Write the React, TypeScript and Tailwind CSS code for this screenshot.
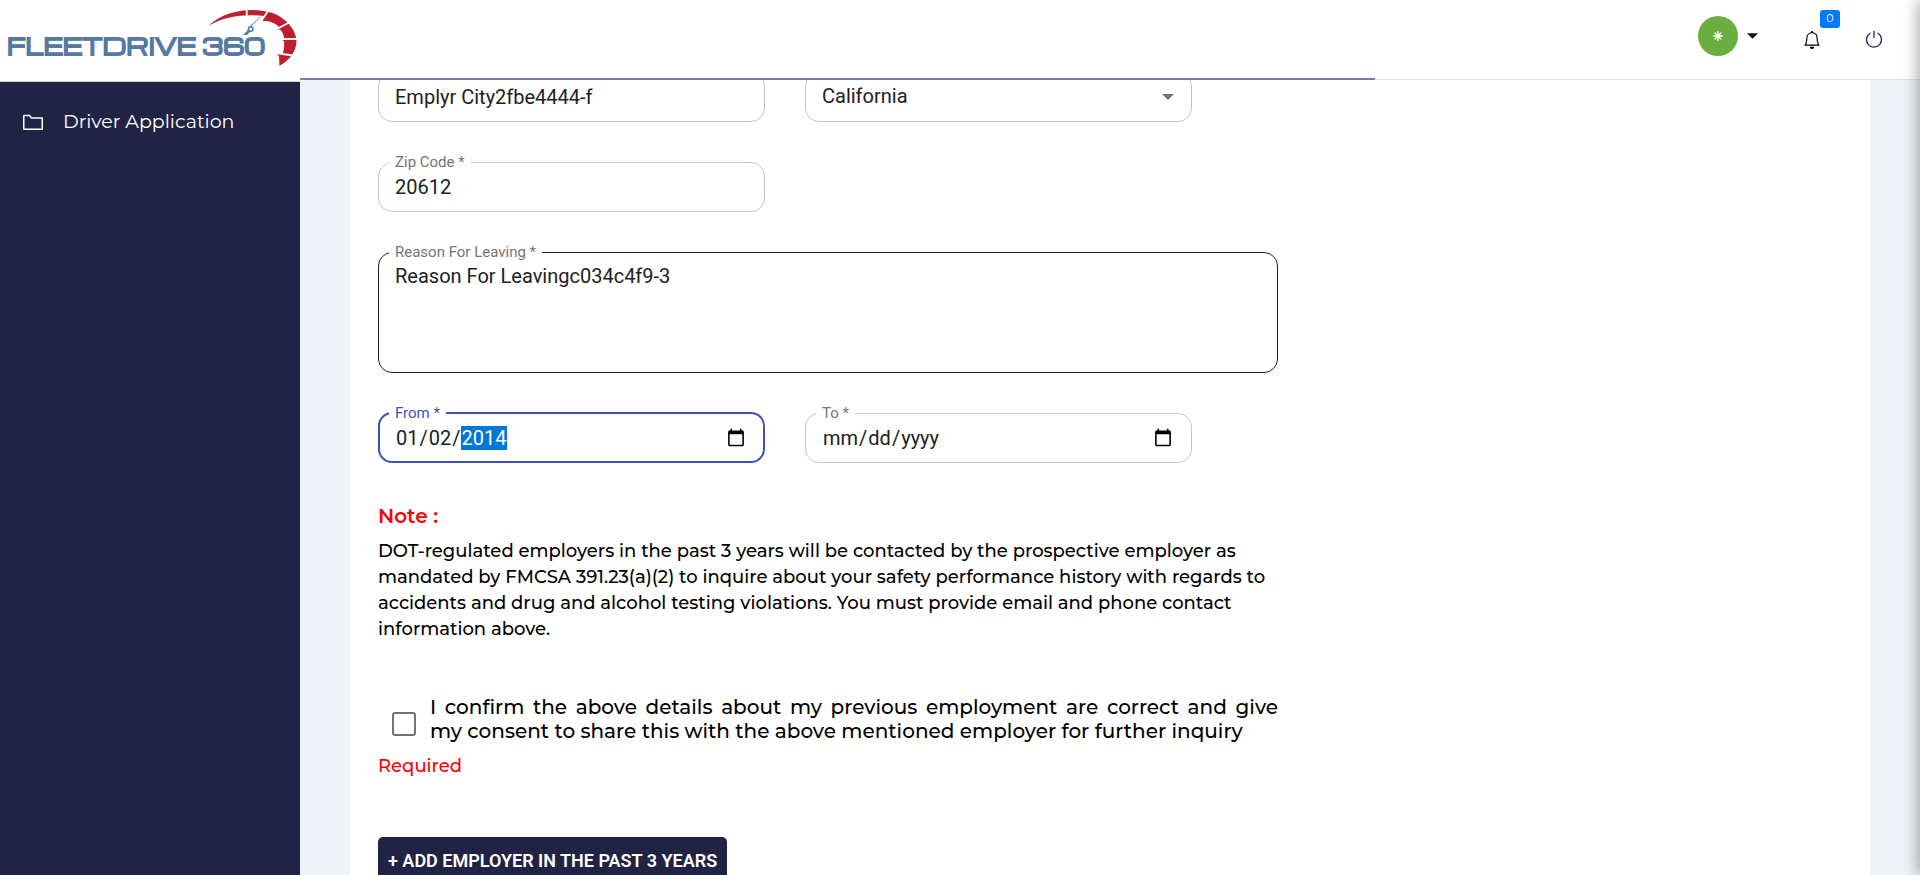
import React from "react";
import { BsBell } from "react-icons/bs";

const field = "w-full max-w-[387px] min-w-0";
const control = "block w-full bg-transparent px-[6px] text-[20px] text-[#212121] outline-none";

type OutlineProps = {
  id: string;
  label: string;
  tone?: "idle" | "hover" | "focus";
  wide?: boolean;
  children: React.ReactNode;
};

function Outline({ id, label, tone = "idle", wide = false, children }: OutlineProps) {
  const tones = {
    idle: "border border-[#c4c4c4] px-[10px] pb-[9px] text-[#757575]",
    hover: "border border-[#212121] px-[10px] pb-[9px] text-[#757575]",
    focus: "border-2 border-[#3f51b5] px-[9px] pb-[8px] text-[#3f51b5]",
  };
  return (
    <fieldset className={(wide ? "w-full min-w-0 " : field + " ") + "rounded-[14px] " + tones[tone]}>
      <legend className="px-[6px] text-[15px] leading-[20px]">
        <label htmlFor={id}>{label}</label>
      </legend>
      {children}
    </fieldset>
  );
}

function Logo() {
  return (
    <a href="#" className="relative flex h-[82px] items-center border-b border-[#d5d5e0] bg-white pt-[10px] pl-[7px]">
      <span className="whitespace-nowrap font-['Michroma','Orbitron','DejaVu_Sans',sans-serif] text-[22px] leading-[26px] font-bold text-[#55799f] [-webkit-text-stroke:1px_#55799f]">
        FLEETDRIVE 360
      </span>
      <svg className="absolute top-0 left-[200px]" width="100" height="70" viewBox="200 0 100 70" aria-hidden="true">
        <path
          d="M208.500 25.800C220 15 236 10 252 10C260 10 271 11.500 279 16C289 22 296 31 296.500 41C296.500 51 290 60 279.500 66L279 56L276 53L282.500 54C284 50 284.500 46 284 41L281 39.500L284 38C283.500 34 282 31 280 29.500L276 30L279 27C275 23 270 20.500 262.500 21L264 16C248 14 226 15 208.500 25.800Z"
          fill="#be1e2d"
        />
        <path
          d="M246.700 9V19M268 11L260 23M289 22.500L276 29.500M298 39H281M293 55.500L276 53"
          stroke="#fff"
          strokeWidth="1.800"
        />
        <path d="M265 12L251.500 26L253 30L250 32L247 35L243 35L247 31L249 27Z" fill="#55799f" />
        <circle cx="250.700" cy="29" r="2.300" fill="#fff" stroke="#55799f" strokeWidth="1.500" />
      </svg>
    </a>
  );
}

export default function App() {
  return (
    <div className="flex h-screen overflow-hidden bg-[#eff3f7] font-['Montserrat','Inter',sans-serif] text-black">
      <aside className="flex w-[300px] shrink-0 flex-col bg-[#212345]">
        <Logo />
        <nav className="pt-[25px] pl-[21px]">
          <a href="#" className="flex items-center gap-[18px] text-[19px] leading-[30px] text-white">
            <svg width="24" height="24" viewBox="0 0 24 24" fill="none" stroke="#fff" strokeWidth="1.500" aria-hidden="true">
              <path d="M2.750 5.500H8.500L10.500 8H21.250V19.250H2.750Z" strokeLinejoin="round" />
            </svg>
            Driver Application
          </a>
        </nav>
      </aside>

      <div className="flex min-w-0 flex-1 flex-col">
        <header className="relative z-10 flex h-[80px] shrink-0 items-center justify-end border-b border-[#dee2e6] bg-white pr-[37px]">
          <div className="absolute -bottom-px left-0 h-[2px] w-[1075px] max-w-full bg-[#7a7bab]" />
          <button type="button" aria-label="Account" className="flex items-center gap-[9px] pb-[8px]">
            <span className="flex size-[40px] items-center justify-center rounded-full bg-[#69ae3f]">
              <svg width="10" height="10" viewBox="-5 -5 10 10" stroke="#fff" strokeWidth="1.400" aria-hidden="true">
                <path d="M0-4.800V4.800M-4.800 0H4.800M-3.400-3.400L3.400 3.400M3.400-3.400L-3.400 3.400" />
              </svg>
            </span>
            <svg width="11" height="6" viewBox="0 0 12 6" aria-hidden="true">
              <path d="M0 0H12L6 6Z" fill="#111" />
            </svg>
          </button>
          <button type="button" aria-label="Notifications" className="relative ml-[45px]">
            <BsBell size={18} />
            <span className="absolute -top-[21px] left-[17px] flex h-[18px] w-[20px] items-center justify-center rounded-[3px] bg-[#007bff] text-[11px] text-white">
              0
            </span>
          </button>
          <button type="button" aria-label="Log out" className="ml-[44px]">
            <svg width="18" height="19" viewBox="0 0 18 19" fill="none" stroke="#212365" strokeWidth="1.300" aria-hidden="true">
              <path d="M9 1V8M5.500 3A7.500 7.500 0 1 0 12.500 3" />
            </svg>
          </button>
        </header>

        <main className="min-h-0 flex-1 overflow-hidden px-[50px]">
          <form className="-mt-2 min-h-full bg-white px-[28px] pb-[40px] font-[Roboto,sans-serif]">
            <div className="flex w-full max-w-[900px] flex-col">
              <div className="flex gap-[40px]">
                <fieldset className={field + " flex h-[50px] items-center rounded-[14px] border border-[#c4c4c4] px-[10px]"}>
                  <input aria-label="City" className={control} defaultValue="Emplyr City2fbe4444-f" />
                </fieldset>
                <fieldset className={field + " flex h-[50px] items-center rounded-[14px] border border-[#c4c4c4] px-[10px]"}>
                  <select aria-label="State" className={control + " appearance-none pb-[2px]"} defaultValue="California">
                    <option>California</option>
                  </select>
                  <svg className="mr-[7px] shrink-0" width="12" height="6" viewBox="0 0 12 6" aria-hidden="true">
                    <path d="M0 0H12L6 6Z" fill="#757575" />
                  </svg>
                </fieldset>
              </div>

              <div className="mt-[30px]">
                <Outline id="zip" label="Zip Code *">
                  <input id="zip" className={control + " h-[30px]"} defaultValue="20612" />
                </Outline>
              </div>

              <div className="mt-[30px]">
                <Outline id="reason" label="Reason For Leaving *" tone="hover" wide>
                  <textarea
                    id="reason"
                    className={control + " h-[101px] resize-none leading-[28px]"}
                    defaultValue="Reason For Leavingc034c4f9-3"
                  />
                </Outline>
              </div>

              <div className="mt-[30px] flex gap-[40px]">
                <Outline id="from" label="From *" tone="focus">
                  <input
                    id="from"
                    type="date"
                    defaultValue="2014-01-02"
                    className={
                      control +
                      " h-[30px] [&::-webkit-datetime-edit-year-field]:bg-[#0078d7] [&::-webkit-datetime-edit-year-field]:text-white"
                    }
                  />
                </Outline>
                <Outline id="to" label="To *">
                  <input id="to" type="date" className={control + " h-[30px]"} />
                </Outline>
              </div>

              <section className="mt-[38px] font-['Montserrat','Inter',sans-serif] font-medium">
                <h2 className="text-[20px] leading-[30px] font-semibold text-[#ff0000]">Note :</h2>
                <p className="mt-[7px] text-[18px] leading-[26px]">
                  DOT-regulated employers in the past 3 years will be contacted by the prospective employer as
                  <br />
                  mandated by FMCSA 391.23(a)(2) to inquire about your safety performance history with regards to
                  <br />
                  accidents and drug and alcohol testing violations. You must provide email and phone contact
                  <br />
                  information above.
                </p>
                <div className="mt-[53px] flex items-center pl-[14px]">
                  <input
                    id="consent"
                    type="checkbox"
                    className="mt-[10px] mr-[14px] size-[24px] shrink-0 appearance-none rounded-[3px] border-2 border-[#757575]"
                  />
                  <label htmlFor="consent" className="flex-1 text-justify text-[20px] leading-[24px]">
                    I confirm the above details about my previous employment are correct and give my&nbsp;consent to
                    share this with the above mentioned employer for further inquiry
                  </label>
                </div>
                <p className="mt-[9px] text-[18px] leading-[28px] text-[#ff0000]">Required</p>
              </section>

              <button
                type="button"
                className="mt-[57px] h-[46px] self-start rounded-[5px] bg-[#212345] px-[10px] text-[18px] font-semibold text-white"
              >
                + ADD EMPLOYER IN THE PAST 3 YEARS
              </button>
            </div>
          </form>
        </main>
      </div>
      <div className="pointer-events-none fixed top-0 -right-[10px] z-20 h-full w-[10px] shadow-[0_0_16px_rgba(0,0,0,0.5)]" />
    </div>
  );
}
